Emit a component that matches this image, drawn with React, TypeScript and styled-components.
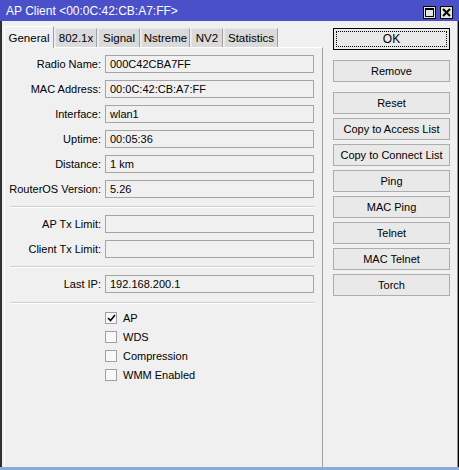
import React from 'react';
import styled, { createGlobalStyle } from 'styled-components';

const GlobalStyle = createGlobalStyle`
  html, body {
    margin: 0;
    padding: 0;
    background: #f0f0f0;
  }
  body {
    font-family: "Liberation Sans", Arial, sans-serif;
    font-size: 11px;
    color: #000;
  }
`;

export const Window = styled.div`
  width: 459px;
  height: 470px;
  display: flex;
  flex-direction: column;
  background: #f0f0f0;
  overflow: hidden;
`;

export const TitleBar = styled.div`
  height: 21px;
  flex: none;
  display: flex;
  align-items: center;
  justify-content: space-between;
  background: #4a50c8;
  color: #fff;
  padding: 0 6px 0 6px;
  font-size: 12px;
`;

export const TitleButtons = styled.div`
  display: flex;
  gap: 4px;
  margin-top: 3px;
`;

export const TitleButton = styled.div`
  width: 11px;
  height: 11px;
  border: 1px solid #000;
  background: #e4e4e4;
  display: flex;
  align-items: center;
  justify-content: center;
`;

export const Body = styled.div`
  flex: 1;
  display: flex;
  border-left: 2px solid #303030;
  border-right: 1px solid #909090;
  margin-right: 1px;
  box-shadow: 1px 0 0 #000;
`;

export const LeftPane = styled.div`
  width: 319px;
  padding-left: 2px;
  display: flex;
  flex-direction: column;
`;

export const TabBar = styled.div`
  display: flex;
  align-items: flex-end;
  height: 22px;
  margin-top: 4px;
`;

export const Tab = styled.div<{ $active?: boolean; $w: number }>`
  width: ${(p) => p.$w}px;
  height: ${(p) => (p.$active ? 22 : 19)}px;
  box-sizing: border-box;
  display: flex;
  align-items: center;
  justify-content: center;
  background: ${(p) => (p.$active ? '#f0f0f0' : '#dadada')};
  border-top: 1px solid ${(p) => (p.$active ? '#ffffff' : '#e8e8e8')};
  border-left: 1px solid ${(p) => (p.$active ? '#ffffff' : '#e8e8e8')};
  border-right: 1px solid #a0a0a0;
  font-size: 11.5px;
  margin-right: 1px;
  position: relative;
  z-index: ${(p) => (p.$active ? 2 : 1)};
  margin-bottom: ${(p) => (p.$active ? -1 : 0)}px;
`;

export const Panel = styled.div`
  flex: 1;
  border-top: 1px solid #ffffff;
  border-left: 1px solid #ffffff;
  border-right: 1px solid #a0a0a0;
  padding: 7px 8px 0 0;
  display: flex;
  flex-direction: column;
`;

export const FieldGroup = styled.div`
  display: flex;
  flex-direction: column;
  gap: 7px;
`;

export const Row = styled.div`
  display: flex;
  align-items: center;
  height: 18px;
`;

export const Label = styled.div`
  width: 96px;
  text-align: right;
  padding-right: 4px;
  white-space: nowrap;
`;

export const Field = styled.div`
  flex: 1;
  height: 18px;
  box-sizing: border-box;
  border: 1px solid #a5a5a5;
  background: #f0f0f0;
  padding-left: 4px;
  display: flex;
  align-items: center;
  white-space: nowrap;
`;

export const Separator = styled.div<{ $top: number; $bottom: number }>`
  margin: ${(p) => p.$top}px 0 ${(p) => p.$bottom}px 5px;
  border-top: 1px solid #d0d0d0;
  border-bottom: 1px solid #ffffff;
`;

export const Checks = styled.div`
  display: flex;
  flex-direction: column;
  gap: 7px;
  padding-left: 100px;
  margin-top: 8px;
`;

export const CheckRow = styled.div`
  display: flex;
  align-items: center;
  gap: 6px;
  height: 12px;
`;

export const Box = styled.div`
  width: 12px;
  height: 12px;
  box-sizing: border-box;
  border: 1px solid #a0a0a0;
  background: #f8f8f8;
  display: flex;
  align-items: center;
  justify-content: center;
`;

export const RightPane = styled.div`
  flex: 1;
  padding: 7px 7px 0 10px;
  display: flex;
  flex-direction: column;
`;

export const Button = styled.div<{ $gap: number; $focus?: boolean }>`
  height: 22px;
  box-sizing: border-box;
  margin-top: ${(p) => p.$gap}px;
  border: 1px solid ${(p) => (p.$focus ? '#000' : '#adadad')};
  background: #e9e9e9;
  display: flex;
  align-items: center;
  justify-content: center;
  position: relative;
  font-size: 11px;
  ${(p) => (p.$focus ? 'font-size: 12px;' : '')}
  &::after {
    content: '';
    display: ${(p) => (p.$focus ? 'block' : 'none')};
    position: absolute;
    inset: 2px;
    border: 1px dotted #000;
  }
`;

export const BottomStrip = styled.div`
  height: 3px;
  flex: none;
  background: #8aabd8;
`;

const tabs = [
  { name: 'General', w: 50 },
  { name: '802.1x', w: 42 },
  { name: 'Signal', w: 42 },
  { name: 'Nstreme', w: 49 },
  { name: 'NV2', w: 32 },
  { name: 'Statistics', w: 54 },
];

const info = [
  ['Radio Name:', '000C42CBA7FF'],
  ['MAC Address:', '00:0C:42:CB:A7:FF'],
  ['Interface:', 'wlan1'],
  ['Uptime:', '00:05:36'],
  ['Distance:', '1 km'],
  ['RouterOS Version:', '5.26'],
];

const checks = [
  { name: 'AP', on: true },
  { name: 'WDS', on: false },
  { name: 'Compression', on: false },
  { name: 'WMM Enabled', on: false },
];

const buttons = [
  { name: 'OK', gap: 0, focus: true },
  { name: 'Remove', gap: 10 },
  { name: 'Reset', gap: 10 },
  { name: 'Copy to Access List', gap: 4 },
  { name: 'Copy to Connect List', gap: 4 },
  { name: 'Ping', gap: 4 },
  { name: 'MAC Ping', gap: 4 },
  { name: 'Telnet', gap: 4 },
  { name: 'MAC Telnet', gap: 4 },
  { name: 'Torch', gap: 4 },
];

export default function App(): JSX.Element {
  return (
    <>
      <GlobalStyle />
      <Window>
        <TitleBar>
          <span>AP Client &lt;00:0C:42:CB:A7:FF&gt;</span>
          <TitleButtons>
            <TitleButton>
              <svg width="9" height="9" viewBox="0 0 9 9">
                <rect x="0.5" y="0.5" width="8" height="8" fill="none" stroke="#000" />
                <rect x="0" y="0" width="9" height="2" fill="#000" />
              </svg>
            </TitleButton>
            <TitleButton>
              <svg width="9" height="9" viewBox="0 0 9 9">
                <path d="M1 1 L8 8 M8 1 L1 8" stroke="#000" strokeWidth="2" />
              </svg>
            </TitleButton>
          </TitleButtons>
        </TitleBar>
        <Body>
          <LeftPane>
            <TabBar>
              {tabs.map((t, i) => (
                <Tab key={t.name} $active={i === 0} $w={t.w}>
                  {t.name}
                </Tab>
              ))}
            </TabBar>
            <Panel>
              <FieldGroup>
                {info.map(([l, v]) => (
                  <Row key={l}>
                    <Label>{l}</Label>
                    <Field>{v}</Field>
                  </Row>
                ))}
              </FieldGroup>
              <Separator $top={8} $bottom={7} />
              <FieldGroup>
                <Row>
                  <Label>AP Tx Limit:</Label>
                  <Field />
                </Row>
                <Row>
                  <Label>Client Tx Limit:</Label>
                  <Field />
                </Row>
              </FieldGroup>
              <Separator $top={8} $bottom={7} />
              <FieldGroup>
                <Row>
                  <Label>Last IP:</Label>
                  <Field>192.168.200.1</Field>
                </Row>
              </FieldGroup>
              <Separator $top={9} $bottom={0} />
              <Checks>
                {checks.map((c) => (
                  <CheckRow key={c.name}>
                    <Box>
                      {c.on && (
                        <svg width="9" height="8" viewBox="0 0 9 8">
                          <path d="M1 4 L3.5 6.5 L8 1" fill="none" stroke="#000" strokeWidth="1.6" />
                        </svg>
                      )}
                    </Box>
                    <span>{c.name}</span>
                  </CheckRow>
                ))}
              </Checks>
            </Panel>
          </LeftPane>
          <RightPane>
            {buttons.map((b) => (
              <Button key={b.name} $gap={b.gap} $focus={b.focus}>
                {b.name}
              </Button>
            ))}
          </RightPane>
        </Body>
        <BottomStrip />
      </Window>
    </>
  );
}
